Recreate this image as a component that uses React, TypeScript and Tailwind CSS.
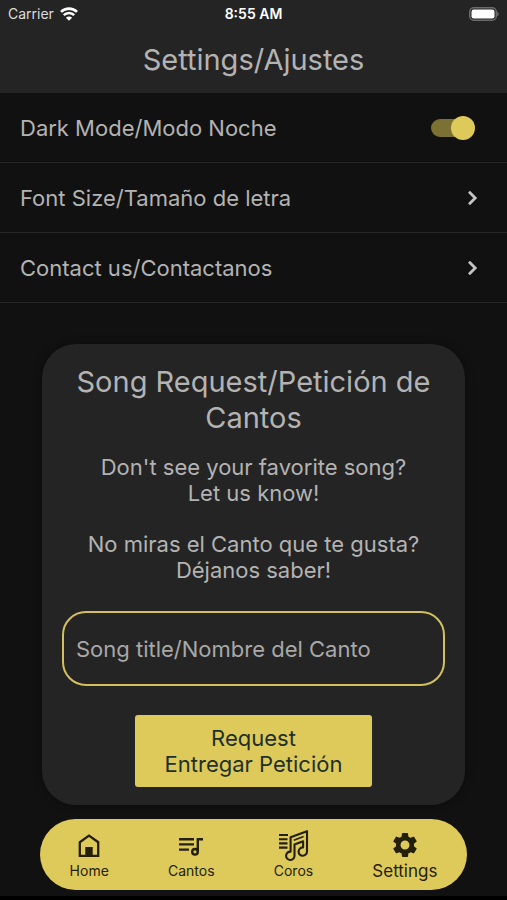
import React, {useState} from "react";
import {MdSettings} from "react-icons/md";

const links = [
    {label: "Font Size/Tamaño de letra", href: "#font-size"},
    {label: "Contact us/Contactanos", href: "#contact"},
];

function WifiIcon() {
    return (
        <svg viewBox="0 0 18 14" className="w-[18px] h-[14px]" fill="none" stroke="#fff" strokeWidth="2.6" aria-hidden="true">
            <path d="M1 4.9a11.4 11.4 0 0 1 16 0"/>
            <path d="M3.8 8.2a7.4 7.4 0 0 1 10.4 0"/>
            <path d="M9 13.8 5.9 10.7a4.4 4.4 0 0 1 6.2 0z" fill="#fff" stroke="none"/>
        </svg>
    );
}

function BatteryIcon() {
    return (
        <svg viewBox="0 0 30 14" className="w-[30px] h-[14px]" aria-hidden="true">
            <rect x="0.75" y="0.75" width="26.5" height="12.5" rx="4" fill="none" stroke="#6b6b6d" strokeWidth="1.5"/>
            <rect x="2.5" y="2.5" width="23" height="9" rx="2.2" fill="#fff"/>
            <path d="M28.2 4.8c2 .8 2 3.6 0 4.4z" fill="#6b6b6d"/>
        </svg>
    );
}

function ChevronIcon() {
    return (
        <svg viewBox="0 0 28 28" className="w-7 h-7" fill="none" stroke="#c4c4c4" strokeWidth="2.8" aria-hidden="true">
            <path d="M10 7.8 16.2 14 10 20.2"/>
        </svg>
    );
}

function HomeIcon() {
    return (
        <svg viewBox="0 0 22 26" className="w-[22px] h-[26px]" aria-hidden="true">
            <path d="M1.8 10.2 11 3.6l9.2 6.6v13.6H1.8z" fill="none" stroke="currentColor" strokeWidth="2.3"/>
            <rect x="7.3" y="15" width="7.4" height="8" fill="currentColor"/>
        </svg>
    );
}

function SongsIcon() {
    return (
        <svg viewBox="0 0 26 22" className="w-[26px] h-[22px]" fill="none" stroke="currentColor" strokeWidth="2.4" aria-hidden="true">
            <path d="M1 5.2h15M1 10.4h15M1 15.6h10"/>
            <path d="M25 5.2h-5.2v12.4"/>
            <circle cx="17" cy="17.8" r="2.8"/>
        </svg>
    );
}

function ChorusIcon() {
    return (
        <svg viewBox="0 0 32 32" className="w-[32px] h-[32px]" fill="none" stroke="currentColor" strokeWidth="2.1" aria-hidden="true">
            <path d="M2 6h9M2 10.2h8.5M2 14.4h8.5M2 18.6h8.5"/>
            <path
                d="M13.6 22.6V8.2L30 2.2v20.4a4.2 4.2 0 1 1-3.9-4.2v-6.2l-8.6 3.2v11.4a4.2 4.2 0 1 1-3.9-4.2z"
                strokeLinejoin="round"
            />
            <path d="M16.8 11.2 26.6 7.6" strokeWidth="1.6"/>
        </svg>
    );
}

const tabs = [
    {label: "Home", icon: <HomeIcon/>, active: false},
    {label: "Cantos", icon: <SongsIcon/>, active: false},
    {label: "Coros", icon: <ChorusIcon/>, active: false},
    {label: "Settings", icon: <MdSettings size={30}/>, active: true},
];

export default function App() {
    const [dark, setDark] = useState(true);
    const [title, setTitle] = useState("");

    return (
        <div className="min-h-screen flex flex-col bg-[#111111] text-[#b3b3b3] font-['Inter',sans-serif] border-b-4 border-black">
            <header className="h-[93px] bg-[#242424]">
                <div className="h-7 px-2 grid grid-cols-3 items-center text-sm text-white">
                    <div className="flex items-center gap-1.5 text-[#dddddd]">
                        Carrier <WifiIcon/>
                    </div>
                    <div className="text-center font-semibold">8:55 AM</div>
                    <div className="flex justify-end">
                        <BatteryIcon/>
                    </div>
                </div>
                <h1 className="pt-3.5 text-center text-[29px] leading-9">Settings/Ajustes</h1>
            </header>

            <div className="text-[22px] leading-7">
                <div className="h-[70px] pl-5 pr-8 flex items-center justify-between border-b border-[#262626]">
                    <label htmlFor="dark-mode">Dark Mode/Modo Noche</label>
                    <input
                        id="dark-mode"
                        type="checkbox"
                        checked={dark}
                        onChange={(e) => setDark(e.target.checked)}
                        className="appearance-none w-11 h-6 flex items-center cursor-pointer relative
                                   before:w-10 before:h-[18px] before:rounded-full before:bg-[#555555]
                                   checked:before:bg-[#7b7133]
                                   after:absolute after:left-0 after:w-6 after:h-6 after:rounded-full
                                   after:bg-[#dddddd] checked:after:left-5 checked:after:bg-[#dec95b]"
                    />
                </div>
                {links.map((link) => (
                    <a
                        key={link.href}
                        href={link.href}
                        className="h-[70px] px-5 flex items-center justify-between border-b border-[#262626]"
                    >
                        {link.label}
                        <ChevronIcon/>
                    </a>
                ))}
            </div>

            <form
                onSubmit={(e) => e.preventDefault()}
                className="mt-[41px] mx-[42px] px-5 pt-5 pb-[18px] flex flex-col items-center rounded-[34px] bg-[#242424]
                           text-center text-[22px] leading-[26px] shadow-[0_0_8px_#00000066]"
            >
                <h2 className="text-[29px] leading-9">Song Request/Petición de Cantos</h2>
                <p className="mt-[18px]">
                    Don't see your favorite song?
                    <br/>
                    Let us know!
                </p>
                <p className="mt-[25px]">
                    No miras el Canto que te gusta?
                    <br/>
                    Déjanos saber!
                </p>
                <input
                    type="text"
                    aria-label="Song title/Nombre del Canto"
                    placeholder="Song title/Nombre del Canto"
                    value={title}
                    onChange={(e) => setTitle(e.target.value)}
                    className="mt-7 w-full h-[75px] px-3 rounded-3xl border-2 border-[#d3c05c] bg-transparent
                               outline-none placeholder:text-[#a8a8a8]"
                />
                <button type="submit" className="mt-[29px] h-[72px] px-[30px] rounded-[3px] bg-[#dec95b] text-[#1d3029]">
                    Request
                    <br/>
                    Entregar Petición
                </button>
            </form>

            <nav className="mt-3.5 mx-10 mb-1.5 h-[71px] flex justify-around rounded-full bg-[#dec95b] text-[#241f08]">
                {tabs.map((tab) => (
                    <a key={tab.label} href={`#${tab.label.toLowerCase()}`} className="flex flex-col items-center pt-2.5">
                        <span className="h-8 flex items-center">{tab.icon}</span>
                        <span className={tab.active ? "text-[17px] leading-5" : "text-sm leading-5"}>{tab.label}</span>
                    </a>
                ))}
            </nav>
        </div>
    );
}
